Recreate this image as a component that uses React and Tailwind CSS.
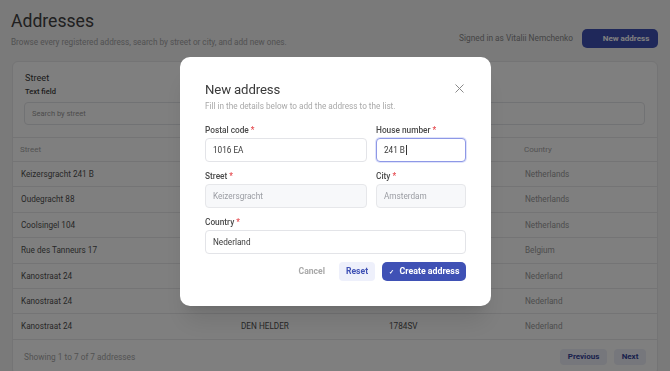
import { useState } from "react";

const ROWS = [
  { street: "Keizersgracht 241 B", city: "Amsterdam", postal: "1016 EA", country: "Netherlands" },
  { street: "Oudegracht 88", city: "Utrecht", postal: "3511 AV", country: "Netherlands" },
  { street: "Coolsingel 104", city: "Rotterdam", postal: "3011 AG", country: "Netherlands" },
  { street: "Rue des Tanneurs 17", city: "Bruxelles", postal: "1000", country: "Belgium" },
  { street: "Kanostraat 24", city: "DEN HELDER", postal: "1784SV", country: "Nederland" },
  { street: "Kanostraat 24", city: "DEN HELDER", postal: "1784SV", country: "Nederland" },
  { street: "Kanostraat 24", city: "DEN HELDER", postal: "1784SV", country: "Nederland" },
];

const cols = "grid grid-cols-[220px_148px_136px_1fr]";

const Label = ({ children }) => (
  <div className="text-[8.3px] leading-[12px] font-medium text-[#4b4b4b]">
    {children} <span className="text-[#e5484d]">*</span>
  </div>
);

const Field = ({ label, value, disabled, focused }) => (
  <div className="flex flex-col gap-[2px]">
    <Label>{label}</Label>
    <div
      className={
        "flex h-[24px] items-center rounded-[4px] border px-[7px] text-[8.2px] " +
        (disabled
          ? "border-[#e6e7ea] bg-[#f7f8fa] text-[#9a9ca2]"
          : focused
          ? "border-[#8e98e6] bg-white text-[#3a3a3a] shadow-[0_0_0_1px_#dfe3fb]"
          : "border-[#e3e4e8] bg-white text-[#3a3a3a]")
      }
    >
      {value}
      {focused ? <span className="ml-[1px] h-[10px] w-px bg-[#333]" /> : null}
    </div>
  </div>
);

export default function App() {
  const [open] = useState(true);

  return (
    <div className="relative min-h-[371px] bg-[#f4f4f5] px-3 font-['Roboto',sans-serif]">
      <div className="flex items-end justify-between pt-[7px]">
        <div>
          <h1 className="-ml-px text-[17.6px] leading-[28px] font-normal text-[#404040]">Addresses</h1>
          <p className="-ml-px text-[8.2px] leading-[14px] text-[#a3a3a3]">
            Browse every registered address, search by street or city, and add new ones.
          </p>
        </div>
        <div className="mb-[1px] flex items-center gap-[9px]">
          <span className="text-[8.3px] text-[#8a8a8a]">Signed in as Vitalii Nemchenko</span>
          <button className="h-[19px] w-[76px] rounded-[5px] bg-[#3f51b5] pl-[12px] text-[8px] font-bold text-white">
            New address
          </button>
        </div>
      </div>

      <div className="mt-3 rounded-[6px] border border-[#e8e8ea] bg-white">
        <div className="px-[12px] pt-[9px] pb-[12px]">
          <div className="text-[9.2px] leading-[14px] text-[#3a3a3a]">Street</div>
          <div className="text-[7.5px] leading-[13px] font-medium text-[#3a3a3a]">Text field</div>
          <div className="mt-[4px] -ml-px flex h-[23px] items-center rounded-[4px] border border-[#e3e4e8] px-[7px] text-[7.5px] text-[#9a9a9a]">
            Search by street
          </div>
        </div>

        <div className="border-t border-[#e8e8ea]">
          <div className={cols + " h-[24px] items-center border-b border-[#e8e8ea] text-[8px] text-[#a6a6a6]"}>
            <div className="px-[7px]">Street</div>
            <div className="px-[7px]">City</div>
            <div className="px-[7px]">Postal code</div>
            <div className="px-[7px]">Country</div>
          </div>
          {ROWS.map((r, i) => (
            <div
              key={i}
              className={cols + " h-[25.4px] items-center border-b border-[#e8e8ea] text-[8.2px] text-[#505050]"}
            >
              <div className="px-[8px]">{r.street}</div>
              <div className="px-[8px]">{r.city}</div>
              <div className="px-[8px]">{r.postal}</div>
              <div className="px-[8px] text-[#9a9a9a]">{r.country}</div>
            </div>
          ))}
          <div className="flex h-[34px] items-center justify-between px-[11px]">
            <span className="text-[8.3px] text-[#a6a6a6]">Showing 1 to 7 of 7 addresses</span>
            <div className="flex items-center gap-[7px]">
              <button className="h-[16px] w-[47px] rounded-[4px] bg-[#eceef8] text-[8px] font-bold text-[#33439a]">
                Previous
              </button>
              <button className="h-[16px] w-[32px] rounded-[4px] bg-[#eceef8] text-[8px] font-bold text-[#33439a]">
                Next
              </button>
            </div>
          </div>
        </div>
      </div>

      {open ? (
        <div className="fixed inset-0 flex items-start justify-center bg-black/50 pt-[57px] pl-px">
          <div className="relative w-[311px] rounded-[10px] bg-white px-[25px] pt-[23px] pb-[25px] shadow-xl">
            <svg
              className="absolute top-[27px] right-[27px]"
              width="9"
              height="9"
              viewBox="0 0 9 9"
              fill="none"
              stroke="#8a8a8a"
              strokeWidth="1"
            >
              <path d="M0.5 0.5L8.5 8.5M8.5 0.5L0.5 8.5" />
            </svg>
            <h2 className="text-[13.2px] leading-[20px] font-normal tracking-[-0.01em] text-[#3a3a3a]">New address</h2>
            <p className="text-[8.2px] leading-[12px] text-[#a8a8a8]">
              Fill in the details below to add the address to the list.
            </p>

            <div className="mt-3 grid grid-cols-[162px_1fr] gap-x-[9px] gap-y-[8px]">
              <Field label="Postal code" value="1016 EA" />
              <Field label="House number" value="241 B" focused />
              <Field label="Street" value="Keizersgracht" disabled />
              <Field label="City" value="Amsterdam" disabled />
              <div className="col-span-2">
                <Field label="Country" value="Nederland" />
              </div>
            </div>

            <div className="mt-[8px] flex items-center justify-end gap-[7px]">
              <button className="h-[19px] pl-[7px] pr-[7px] text-[8.6px] font-bold text-[#a8a8a8]">Cancel</button>
              <button className="h-[19px] w-[36px] rounded-[4px] bg-[#eef0fb] text-[8.6px] font-bold text-[#3f51b5]">
                Reset
              </button>
              <button className="flex h-[19px] w-[84px] items-center justify-center gap-[6px] rounded-[5px] bg-[#3f51b5] text-[8.8px] font-bold text-white">
                <span className="text-[6px]">✓</span>
                Create address
              </button>
            </div>
          </div>
        </div>
      ) : null}
    </div>
  );
}
